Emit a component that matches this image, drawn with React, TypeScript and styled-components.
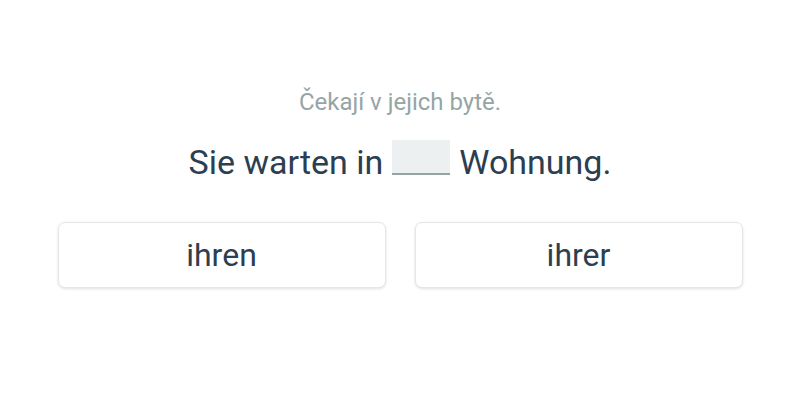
import styled, { createGlobalStyle } from 'styled-components';

const OPTIONS = ['ihren', 'ihrer'];

const App = () => {
  return (
    <>
      <GlobalStyle />
      <Page>
        <Translation>Čekají v jejich bytě.</Translation>
        <Sentence>
          <span>Sie warten in</span>
          <Blank />
          <span>Wohnung.</span>
        </Sentence>
        <Options>
          {OPTIONS.map((option) => (
            <OptionButton key={option} type='button'>
              {option}
            </OptionButton>
          ))}
        </Options>
      </Page>
    </>
  );
};

const GlobalStyle = createGlobalStyle`
  * {
    box-sizing: border-box;
  }

  body {
    margin: 0;
    background-color: #ffffff;
    font-family: Roboto, 'Noto Sans', sans-serif;
  }
`;

const Page = styled.main`
  display: flex;
  flex-direction: column;
  align-items: center;
  width: 800px;
  height: 400px;
  padding-top: 88px;
`;

const Translation = styled.p`
  margin: 0;
  color: #95a5a6;
  font-size: 24px;
  line-height: 28px;
`;

const Sentence = styled.p`
  display: flex;
  align-items: flex-end;
  gap: 9px;
  margin: 24px 0 0;
  color: #2c3e50;
  font-size: 34px;
  line-height: 40px;
`;

const Blank = styled.span`
  display: inline-block;
  width: 58px;
  height: 35px;
  margin-bottom: 7px;
  background-color: #ecf0f1;
  border-bottom: 2px solid #95a5a6;
`;

const Options = styled.div`
  display: grid;
  grid-template-columns: 328px 328px;
  gap: 29px;
  margin-top: 40px;
`;

const OptionButton = styled.button`
  height: 66px;
  border: 1px solid #e6e6e6;
  border-radius: 7px;
  background-color: #ffffff;
  box-shadow: 0 1px 3px rgba(0, 0, 0, 0.12);
  color: #2c3e50;
  font-family: Roboto, 'Noto Sans', sans-serif;
  font-size: 32px;
  cursor: pointer;
`;

export default App;
